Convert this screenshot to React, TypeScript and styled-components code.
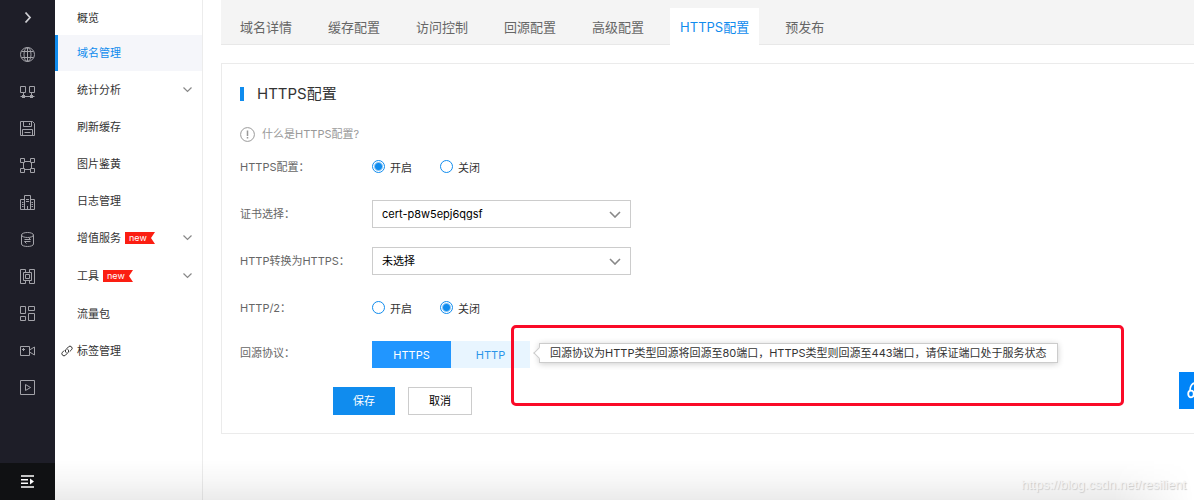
import React from 'react';
import styled, { createGlobalStyle, css } from 'styled-components';

const GlobalStyle = createGlobalStyle`
  *, *::before, *::after { box-sizing: border-box; }
  body {
    margin: 0;
    background: #fff;
    color: #333;
    font-family: Inter, "Noto Sans CJK SC", sans-serif;
    font-size: 11px;
    line-height: 16px;
  }
  button, select, input { font: inherit; margin: 0; }
  a { color: inherit; text-decoration: none; }
`;

const Page = styled.div`
  position: relative;
  display: flex;
  min-height: 100vh;
  overflow: hidden;
`;

const Rail = styled.nav`
  display: flex;
  flex-direction: column;
  flex: none;
  width: 55px;
  background: #1e1e28;
`;

const RailButton = styled.button<{ $tone?: 'first' | 'footer' }>`
  display: flex;
  align-items: center;
  justify-content: center;
  height: 37px;
  padding: 0;
  border: 0;
  background: none;
  color: #a3a3a9;
  ${({ $tone }) => $tone === 'first' && css`
    height: 36px;
    padding-bottom: 2px;
    color: #cfcfd3;
  `}
  ${({ $tone }) => $tone === 'footer' && css`
    margin-top: auto;
    background: #101113;
    color: #fff;
  `}
`;

const Glyph = styled.svg`
  display: block;
  flex: none;
  fill: none;
  stroke: currentColor;
`;

const Menu = styled.nav`
  flex: none;
  width: 148px;
  border-right: 1px solid #ececec;
`;

const MenuLink = styled.a<{ $height?: number; $active?: boolean }>`
  display: flex;
  align-items: center;
  height: ${({ $height }) => $height ?? 37}px;
  padding: 0 10px 0 6px;
  color: ${({ $active }) => ($active ? '#108cee' : '#333')};
  ${({ $active }) => $active && css`
    padding-left: 3px;
    border-left: 3px solid #108cee;
    background: #f5f6fa;
  `}
`;

const MenuIcon = styled.span`
  flex: none;
  width: 16px;
`;

const Caret = styled(Glyph)`
  margin-left: auto;
  color: #888;
`;

const NewBadge = styled.span`
  width: 30px;
  height: 12px;
  margin-left: 4px;
  padding-left: 4px;
  background: #fb1e12;
  clip-path: polygon(0 0, 100% 0, 26px 50%, 100% 100%, 0 100%);
  color: #fff;
  font-size: 9px;
  line-height: 11px;
`;

const Main = styled.main`
  flex: 1;
  min-width: 0;
  padding-left: 18px;
`;

const Tabs = styled.div`
  display: flex;
  align-items: flex-end;
  gap: 16px;
  height: 45px;
  padding-left: 9px;
  border-bottom: 1px solid #e8e8e8;
  background: #f4f4f4;
`;

const Tab = styled.button<{ $active?: boolean }>`
  flex: none;
  height: 37px;
  margin-bottom: -1px;
  padding: 0 10px;
  border: 0;
  background: ${({ $active }) => ($active ? '#fff' : 'transparent')};
  color: ${({ $active }) => ($active ? '#108cee' : '#666')};
  font-size: 13px;
  line-height: 20px;
`;

const Panel = styled.section`
  margin-top: 18px;
  padding: 18px;
  border: 1px solid #ebebeb;
  border-right: 0;
`;

const Title = styled.h1`
  display: flex;
  align-items: center;
  gap: 13px;
  margin: 0;
  font-size: 15px;
  font-weight: 400;
  line-height: 24px;

  &::before {
    content: '';
    width: 4px;
    height: 14px;
    background: #108cee;
  }
`;

const HelpLink = styled.a`
  display: flex;
  align-items: center;
  gap: 7px;
  height: 18px;
  margin: 19px 0 10px;
  color: #999;
`;

const Form = styled.form`
  display: flex;
  flex-direction: column;
  gap: 19px;
`;

const Row = styled.div`
  display: flex;
  align-items: center;
  height: 28px;
`;

const FieldName = styled.label`
  flex: none;
  width: 132px;
  color: #666;
`;

const RadioLabel = styled.label`
  display: flex;
  align-items: flex-start;
  gap: 5px;
  margin-right: 28px;
  padding-top: 2px;
`;

const Radio = styled.input`
  appearance: none;
  width: 13px;
  height: 13px;
  border: 1px solid #108cee;
  border-radius: 50%;
  background: #fff;

  &:checked {
    background: radial-gradient(circle, #108cee 3px, #fff 5px);
  }
`;

const SelectBox = styled.div`
  position: relative;
  width: 259px;
`;

const Select = styled.select`
  appearance: none;
  display: block;
  width: 100%;
  height: 28px;
  padding: 0 28px 0 9px;
  border: 1px solid #ccc;
  border-radius: 0;
  background: #fff;
  color: #000;
`;

const SelectCaret = styled(Glyph)`
  position: absolute;
  top: 11px;
  right: 10px;
  color: #888;
  pointer-events: none;
`;

const Segment = styled.button<{ $active?: boolean }>`
  flex: none;
  width: 79px;
  height: 27px;
  padding: 0;
  border: 0;
  background: ${({ $active }) => ($active ? '#2196ff' : '#e8f5ff')};
  color: ${({ $active }) => ($active ? '#fff' : '#2b95e9')};
`;

const Tip = styled.div`
  position: relative;
  flex: none;
  height: 20px;
  margin-left: 9px;
  padding: 0 10px;
  border: 1px solid #ccc;
  background: #fff;
  box-shadow: 0 1px 6px rgba(0, 0, 0, 0.2);
  line-height: 18px;
  white-space: nowrap;

  &::before {
    content: '';
    position: absolute;
    top: 5px;
    left: -5px;
    width: 8px;
    height: 8px;
    border: solid #ccc;
    border-width: 0 0 1px 1px;
    background: #fff;
    transform: rotate(45deg);
  }
`;

const Highlight = styled.div`
  position: absolute;
  inset: -19px -67px -44px -29px;
  border: 3px solid #fa0a28;
  border-radius: 5px;
  pointer-events: none;
`;

const OriginRow = styled(Row)`
  height: 27px;

  ${FieldName}, ${Tip} {
    margin-bottom: 3px;
  }
`;

const Actions = styled.div`
  display: flex;
  gap: 13px;
  margin-top: 19px;
  padding-left: 93px;
`;

const ActionButton = styled.button<{ $primary?: boolean }>`
  width: ${({ $primary }) => ($primary ? 62 : 64)}px;
  height: 28px;
  padding: 0;
  border: 1px solid ${({ $primary }) => ($primary ? '#108cee' : '#ccc')};
  background: ${({ $primary }) => ($primary ? '#108cee' : '#fff')};
  color: ${({ $primary }) => ($primary ? '#fff' : '#000')};
`;

const BottomShade = styled.div`
  position: absolute;
  right: 0;
  bottom: 0;
  left: 55px;
  height: 40px;
  background: linear-gradient(to bottom, rgba(0, 0, 0, 0), rgba(0, 0, 0, 0.03) 50%, rgba(0, 0, 0, 0.08));
  mask-image: linear-gradient(to left, transparent, #000 80px);
  pointer-events: none;
`;

const Watermark = styled.div`
  position: absolute;
  right: 8px;
  bottom: 6px;
  color: #f4f4f4;
  font-family: "Liberation Sans", sans-serif;
  font-size: 13px;
  line-height: 18px;
  text-shadow: 1px 1px 1px #c8c8c8;
`;

const FloatButton = styled.button`
  position: fixed;
  top: 372px;
  right: 0;
  width: 15px;
  height: 37px;
  padding: 0 0 0 8px;
  border: 0;
  background: #0084f8;
  color: #fff;
  overflow: hidden;
`;

const railIcons: { name: string; art: React.ReactNode }[] = [
  {
    name: '网络',
    art: (
      <>
        <circle cx="7.5" cy="7.5" r="7" />
        <ellipse cx="7.5" cy="7.5" rx="3.5" ry="7" />
        <path d="M7.5 .5v14M1.5 4.5h12M1.5 10.5h12" />
      </>
    ),
  },
  {
    name: '负载均衡',
    art: (
      <>
        <path d="M.5 2.5h5v6h-5zM9.5 2.5h5v6h-5zM3.5 8.5v4M11.5 8.5v4M.5 12.5h14" />
        <path d="M2 11h3v3h-3zM10 11h3v3h-3z" fill="currentColor" stroke="none" />
      </>
    ),
  },
  {
    name: '存储',
    art: <path d="M.5 .5h12l2 2v12h-14zM3.5 .5v5h8v-5M9.5 2v2M2.5 14.5v-6h10v6M4.5 11.5h6" />,
  },
  {
    name: '私有网络',
    art: (
      <path d="M.5 .5h4v4h-4zM10.5 .5h4v4h-4zM.5 10.5h4v4h-4zM10.5 10.5h4v4h-4zM4.5 3.5h6M4.5 11.5h6M3.5 4.5v6M11.5 4.5v6" />
    ),
  },
  {
    name: '企业',
    art: (
      <path d="M4.5 14.5v-14h6v14M4.5 4.5h-4v10h14v-10h-4M6 4.5h3M6 6.5h3M2 7.5h1.5M2 9.5h1.5M2 11.5h1.500M11.5 7.5h1.500M11.5 9.5h1.500M11.5 11.5h1.500M7.5 11v3.500" />
    ),
  },
  {
    name: '数据库',
    art: (
      <>
        <ellipse cx="7.5" cy="3" rx="6" ry="2.5" />
        <path d="M1.5 3v9c0 3.300 12 3.300 12 0v-9M4.5 7.500h6l-2-2M10.500 9.500h-6l2 2" />
      </>
    ),
  },
  {
    name: '计算',
    art: (
      <path d="M5.5 .5h-5v14h5v-3M9.5 .5h5v14h-5v-3M5.5 .5v3M9.5 .5v3M5.5 5.500h4v4h-4zM3.500 3.500h8v8h-8z" />
    ),
  },
  {
    name: '控制台',
    art: <path d="M.5 .5h5v7h-5zM8.5 .5h6v4h-6zM.5 10.5h5v4h-5zM8.5 7.5h6v7h-6z" />,
  },
  {
    name: '视频',
    art: <path d="M.5 3.5h9v9h-9zM9.5 7l5-3v8l-5-3M2 6.5h3M3.5 5v3" />,
  },
  {
    name: '播放',
    art: <path d="M.5 .5h14v14h-14zM5.5 4.5l5 3-5 3z" />,
  },
];

const tabs = ['域名详情', '缓存配置', '访问控制', '回源配置', '高级配置', 'HTTPS配置', '预发布'];

type MenuItem = {
  label: string;
  height?: number;
  active?: boolean;
  caret?: boolean;
  badge?: boolean;
  link?: boolean;
};

const menu: MenuItem[] = [
  { label: '概览', height: 35 },
  { label: '域名管理', height: 36, active: true },
  { label: '统计分析', caret: true },
  { label: '刷新缓存' },
  { label: '图片鉴黄' },
  { label: '日志管理' },
  { label: '增值服务', height: 38, caret: true, badge: true },
  { label: '工具', height: 38, caret: true, badge: true },
  { label: '流量包' },
  { label: '标签管理', link: true },
];

function LinkIcon() {
  return (
    <Glyph width="12" height="12" viewBox="0 0 12 12" strokeLinecap="round">
      <path d="M5 7.500a2 2 0 0 1 0-3l2.500-2.700a2 2 0 0 1 3 3l-1.500 1.500M7 4.500a2 2 0 0 1 0 3l-2.500 2.700a2 2 0 0 1-3-3l1.500-1.500" />
    </Glyph>
  );
}

function RadioPair({ name, value }: { name: string; value: 'on' | 'off' }) {
  return (
    <>
      <RadioLabel>
        <Radio type="radio" name={name} value="on" defaultChecked={value === 'on'} />
        开启
      </RadioLabel>
      <RadioLabel>
        <Radio type="radio" name={name} value="off" defaultChecked={value === 'off'} />
        关闭
      </RadioLabel>
    </>
  );
}

function SelectField({ id, value }: { id: string; value: string }) {
  return (
    <SelectBox>
      <Select id={id} defaultValue={value}>
        <option>{value}</option>
      </Select>
      <SelectCaret width="12" height="7" viewBox="0 0 12 7" strokeWidth="1.600">
        <path d="M1 1l5 5 5-5" />
      </SelectCaret>
    </SelectBox>
  );
}

export default function App() {
  return (
    <Page>
      <GlobalStyle />
      <Rail>
        <RailButton $tone="first" aria-label="展开">
          <Glyph width="15" height="15" viewBox="0 0 15 15" strokeWidth="1.800">
            <path d="M5.500 2.500l4.500 5-4.500 5" />
          </Glyph>
        </RailButton>
        {railIcons.map(({ name, art }) => (
          <RailButton key={name} aria-label={name}>
            <Glyph width="15" height="15" viewBox="0 0 15 15">
              {art}
            </Glyph>
          </RailButton>
        ))}
        <RailButton $tone="footer" aria-label="菜单">
          <Glyph width="15" height="13" viewBox="0 0 15 13" strokeWidth="1.500">
            <path d="M1 1h13M1 4.700h7M1 8.300h7M1 12h13" />
            <path d="M10 3.500l4 3-4 3z" fill="currentColor" stroke="none" />
          </Glyph>
        </RailButton>
      </Rail>

      <Menu>
        {menu.map((item) => (
          <MenuLink key={item.label} href="#" $height={item.height} $active={item.active}>
            <MenuIcon>{item.link && <LinkIcon />}</MenuIcon>
            {item.label}
            {item.badge && <NewBadge>new</NewBadge>}
            {item.caret && (
              <Caret width="9" height="6" viewBox="0 0 9 6" strokeWidth="1.200">
                <path d="M.5 .5l4 4 4-4" />
              </Caret>
            )}
          </MenuLink>
        ))}
      </Menu>

      <Main>
        <Tabs>
          {tabs.map((tab) => (
            <Tab key={tab} $active={tab === 'HTTPS配置'}>
              {tab}
            </Tab>
          ))}
        </Tabs>

        <Panel>
          <Title>HTTPS配置</Title>
          <HelpLink href="#">
            <Glyph width="15" height="15" viewBox="0 0 15 15">
              <circle cx="7.500" cy="7.500" r="6.900" />
              <path d="M7.500 3.500v5.500M7.500 10v1.500" strokeWidth="1.500" />
            </Glyph>
            什么是HTTPS配置?
          </HelpLink>
          <Form>
            <Row role="radiogroup" aria-labelledby="https-name">
              <FieldName as="span" id="https-name">HTTPS配置：</FieldName>
              <RadioPair name="https" value="on" />
            </Row>
            <Row>
              <FieldName htmlFor="cert">证书选择：</FieldName>
              <SelectField id="cert" value="cert-p8w5epj6qgsf" />
            </Row>
            <Row>
              <FieldName htmlFor="redirect">HTTP转换为HTTPS：</FieldName>
              <SelectField id="redirect" value="未选择" />
            </Row>
            <Row role="radiogroup" aria-labelledby="http2-name">
              <FieldName as="span" id="http2-name">HTTP/2：</FieldName>
              <RadioPair name="http2" value="off" />
            </Row>
            <OriginRow role="group" aria-labelledby="origin-name">
              <FieldName as="span" id="origin-name">回源协议：</FieldName>
              <Segment type="button" $active>HTTPS</Segment>
              <Segment type="button">HTTP</Segment>
              <Tip>
                回源协议为HTTP类型回源将回源至80端口，HTTPS类型则回源至443端口，请保证端口处于服务状态
                <Highlight />
              </Tip>
            </OriginRow>
          </Form>
          <Actions>
            <ActionButton type="button" $primary>保存</ActionButton>
            <ActionButton type="button">取消</ActionButton>
          </Actions>
        </Panel>
      </Main>

      <BottomShade />
      <Watermark>https://blog.csdn.net/resilient</Watermark>
      <FloatButton aria-label="快捷链接">
        <Glyph width="24" height="20" viewBox="0 0 24 20" strokeWidth="1.800">
          <ellipse cx="4" cy="13" rx="2.800" ry="3.300" />
          <path d="M3 9.500c0-4 2-7.500 6-7.500M7 11v5" />
        </Glyph>
      </FloatButton>
    </Page>
  );
}
